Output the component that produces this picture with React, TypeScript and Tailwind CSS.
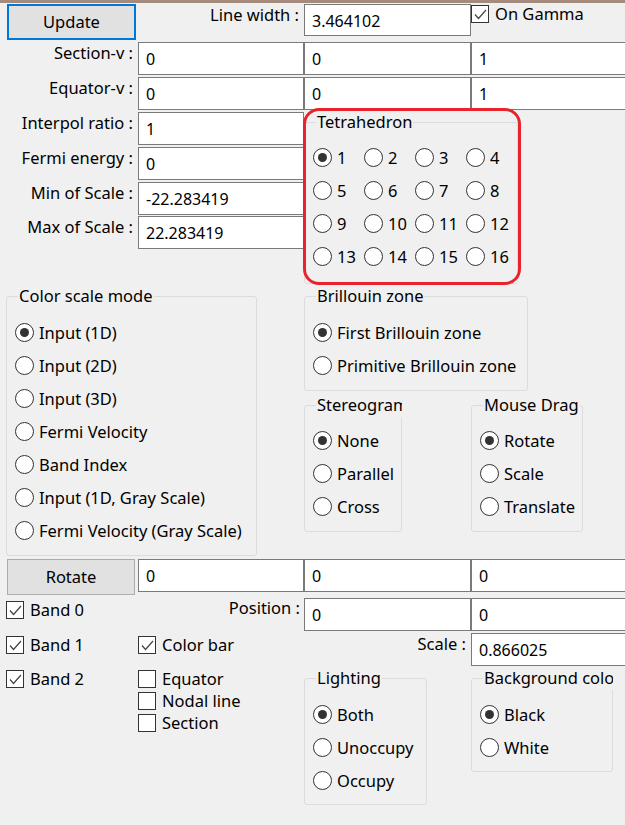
import React from "react";

const TB = ({ v, className }: { v: string; className: string }) => (
  <div className={"bg-white border border-[#7a7a7a] flex items-center pl-[7px] pt-[1px] text-[16px] whitespace-nowrap overflow-hidden " + className}>{v}</div>
);

const Radio = ({ label, checked }: { label: string; checked?: boolean }) => (
  <div className="flex items-center h-[33px] gap-[5px] whitespace-nowrap">
    <span className="w-[19px] h-[19px] shrink-0 rounded-full border-[1.5px] border-[#333] bg-white flex items-center justify-center">
      {checked && <span className="w-[9px] h-[9px] rounded-full bg-[#333]" />}
    </span>
    <span className="leading-[20px]">{label}</span>
  </div>
);

const Check = ({ label, checked }: { label: string; checked?: boolean }) => (
  <div className="flex items-center gap-[6px] whitespace-nowrap">
    <span className="w-[18px] h-[18px] shrink-0 border-[1.5px] border-[#333] bg-white flex items-center justify-center">
      {checked && (
        <svg width="15" height="15" viewBox="0 0 15 15">
          <path d="M2 7.5 L5.5 11.5 L13 3" fill="none" stroke="#444" strokeWidth="1.2" />
        </svg>
      )}
    </span>
    <span className="leading-[20px]">{label}</span>
  </div>
);

const Group = ({ title, className, clip, children }: { title: string; className: string; clip?: boolean; children?: React.ReactNode }) => (
  <div className={"relative pt-[10px] shrink-0 " + className}>
    <div className="h-full border border-[#dcdcdc] rounded-[3px]">{children}</div>
    <div
      className={
        clip
          ? "absolute left-[12px] top-[-2px] px-[1px] leading-[24px] bg-[#f0f0f0] whitespace-nowrap overflow-hidden max-w-[calc(100%-12px)]"
          : "absolute left-[12px] top-[-2px] px-[1px] leading-[24px] bg-[#f0f0f0] whitespace-nowrap"
      }
    >
      {title}
    </div>
  </div>
);

const Label = ({ text, className }: { text: string; className: string }) => (
  <div className={"text-right leading-[20px] whitespace-nowrap shrink-0 " + className}>{text}</div>
);

export default function App() {
  return (
    <div className="relative w-[625px] h-[825px] overflow-hidden bg-[#f0f0f0] text-black text-[16.5px] leading-[20px] font-['Noto_Sans',sans-serif]">
      <div className="h-[3px] bg-[#a58b7c]" />

      {/* Row A */}
      <div className="flex h-[39px]">
        <div className="w-[138px] shrink-0">
          <div className="ml-[7px] mt-[1px] w-[129px] h-[36px] border-2 border-[#0078d7] bg-[#e1e1e1] flex items-center justify-center">Update</div>
        </div>
        <Label text="Line width :" className="w-[166px] pr-[5px] pt-[2px]" />
        <TB v="3.464102" className="w-[167px] h-[32px] mt-[1px] shrink-0" />
        <div className="w-[154px] shrink-0 pt-[1px]">
          <Check label="On Gamma" checked />
        </div>
      </div>

      {/* Section-v */}
      <div className="flex h-[33px]">
        <Label text="Section-v :" className="w-[138px] pr-[5px] pt-[1px]" />
        <TB v="0" className="w-[166px] h-[33px] shrink-0" />
        <TB v="0" className="w-[167px] h-[33px] shrink-0" />
        <TB v="1" className="w-[160px] h-[33px] shrink-0" />
      </div>
      {/* Equator-v */}
      <div className="flex h-[33px] mt-[2px]">
        <Label text="Equator-v :" className="w-[138px] pr-[5px] pt-[1px]" />
        <TB v="0" className="w-[166px] h-[33px] shrink-0" />
        <TB v="0" className="w-[167px] h-[33px] shrink-0" />
        <TB v="1" className="w-[160px] h-[33px] shrink-0" />
      </div>

      {/* Middle block */}
      <div className="flex h-[176px]">
        <div className="w-[304px] shrink-0 flex flex-col">
          <div className="flex h-[33px] mt-[2px]">
            <Label text="Interpol ratio :" className="w-[138px] pr-[5px] pt-[1px]" />
            <TB v="1" className="w-[166px] h-[33px] shrink-0" />
          </div>
          <div className="flex h-[33px] mt-[2px]">
            <Label text="Fermi energy :" className="w-[138px] pr-[5px] pt-[1px]" />
            <TB v="0" className="w-[166px] h-[33px] shrink-0" />
          </div>
          <div className="flex h-[33px] mt-[2px]">
            <Label text="Min of Scale :" className="w-[138px] pr-[5px] pt-[1px]" />
            <TB v="-22.283419" className="w-[166px] h-[33px] shrink-0" />
          </div>
          <div className="flex h-[33px] mt-[1px]">
            <Label text="Max of Scale :" className="w-[138px] pr-[5px] pt-[1px]" />
            <TB v="22.283419" className="w-[166px] h-[33px] shrink-0" />
          </div>
        </div>
        <Group title="Tetrahedron" className="w-[214px] h-[172px] mt-[2px]">
          <div className="grid grid-cols-[51px_51px_51px_51px] pl-[8px] pt-[18px]">
            {Array.from({ length: 16 }, (_, i) => (
              <Radio key={i} label={String(i + 1)} checked={i === 0} />
            ))}
          </div>
        </Group>
      </div>

      {/* Lower block */}
      <div className="flex h-[270px]">
        <Group title="Color scale mode" className="ml-[6px] w-[251px] h-[270px]">
          <div className="pl-[8px] pt-[19px]">
            <Radio label="Input (1D)" checked />
            <Radio label="Input (2D)" />
            <Radio label="Input (3D)" />
            <Radio label="Fermi Velocity" />
            <Radio label="Band Index" />
            <Radio label="Input (1D, Gray Scale)" />
            <Radio label="Fermi Velocity (Gray Scale)" />
          </div>
        </Group>
        <div className="ml-[47px] flex flex-col">
          <Group title="Brillouin zone" className="w-[224px] h-[105px]">
            <div className="pl-[8px] pt-[19px]">
              <Radio label="First Brillouin zone" checked />
              <Radio label="Primitive Brillouin zone" />
            </div>
          </Group>
          <div className="flex mt-[4px]">
            <Group title="Stereogram" clip className="w-[98px] h-[137px]">
              <div className="pl-[8px] pt-[18px]">
                <Radio label="None" checked />
                <Radio label="Parallel" />
                <Radio label="Cross" />
              </div>
            </Group>
            <Group title="Mouse Drag" className="ml-[69px] w-[112px] h-[137px]">
              <div className="pl-[8px] pt-[18px]">
                <Radio label="Rotate" checked />
                <Radio label="Scale" />
                <Radio label="Translate" />
              </div>
            </Group>
          </div>
        </div>
      </div>

      {/* Rotate row */}
      <div className="flex h-[39px] mt-[3px]">
        <div className="ml-[7px] w-[128px] h-[36px] shrink-0 border border-[#adadad] bg-[#e1e1e1] flex items-center justify-center">Rotate</div>
        <TB v="0" className="ml-[3px] w-[166px] h-[33px] shrink-0" />
        <TB v="0" className="w-[167px] h-[33px] shrink-0" />
        <TB v="0" className="w-[160px] h-[33px] shrink-0" />
      </div>

      {/* Band 0 / Position */}
      <div className="flex h-[34px]">
        <div className="w-[138px] shrink-0 pl-[6px] pt-[2px]">
          <Check label="Band 0" checked />
        </div>
        <Label text="Position :" className="w-[166px] pr-[4px]" />
        <TB v="0" className="w-[167px] h-[33px] shrink-0" />
        <TB v="0" className="w-[160px] h-[33px] shrink-0" />
      </div>

      {/* Band 1 / Color bar / Scale */}
      <div className="flex h-[36px]">
        <div className="w-[138px] shrink-0 pl-[6px] pt-[3px]">
          <Check label="Band 1" checked />
        </div>
        <div className="w-[166px] shrink-0 pt-[3px]">
          <Check label="Color bar" checked />
        </div>
        <Label text="Scale :" className="w-[167px] pr-[5px] pt-[2px]" />
        <TB v="0.866025" className="w-[160px] h-[33px] mt-[1px] shrink-0" />
      </div>

      {/* Band 2 etc */}
      <div className="flex">
        <div className="w-[138px] shrink-0 pl-[6px] pt-[1px]">
          <Check label="Band 2" checked />
        </div>
        <div className="w-[166px] shrink-0 flex flex-col">
          <div className="h-[22px] flex items-center"><Check label="Equator" /></div>
          <div className="h-[22px] flex items-center"><Check label="Nodal line" /></div>
          <div className="h-[22px] flex items-center"><Check label="Section" /></div>
        </div>
        <Group title="Lighting" className="w-[123px] h-[137px]">
          <div className="pl-[8px] pt-[19px]">
            <Radio label="Both" checked />
            <Radio label="Unoccupy" />
            <Radio label="Occupy" />
          </div>
        </Group>
        <Group title="Background color" clip className="ml-[44px] w-[142px] h-[104px]">
          <div className="pl-[8px] pt-[19px]">
            <Radio label="Black" checked />
            <Radio label="White" />
          </div>
        </Group>
      </div>

      {/* Red annotation overlay */}
      <div className="absolute left-[303px] top-[108px] w-[218px] h-[177px] border-[3px] border-[#e8232b] rounded-[16px] pointer-events-none" />
    </div>
  );
}
